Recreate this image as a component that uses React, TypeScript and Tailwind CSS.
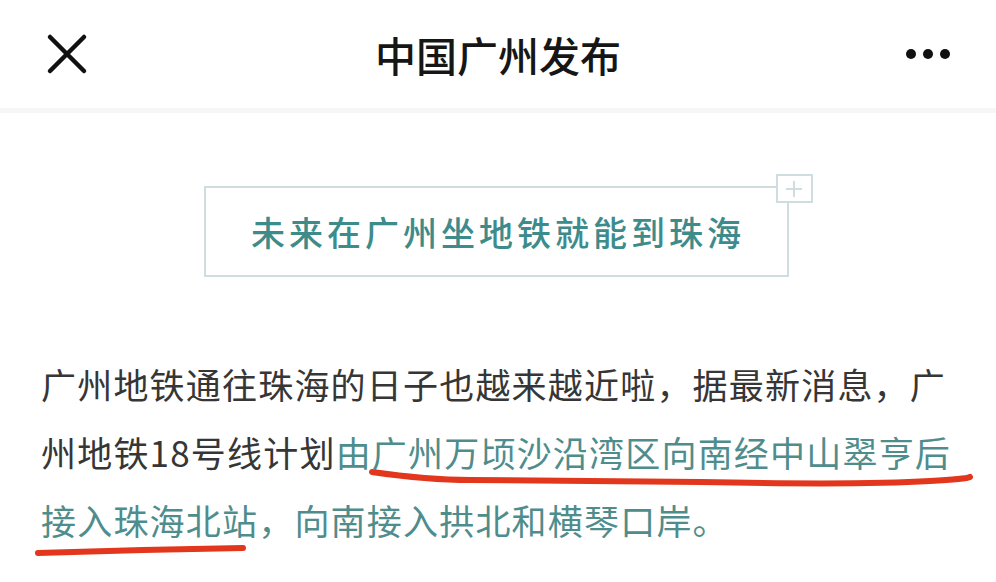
import React from 'react'

const cjk = { fontFamily: '"Noto Sans CJK SC", "Noto Sans", sans-serif' }

const Header = () => (
  <div className="h-[108px] flex items-center justify-between px-[44px] bg-white relative">
    <svg width="42" height="42" viewBox="0 0 42 42" className="ml-[2px]">
      <path d="M4 4 L38 38 M38 4 L4 38" stroke="#111" strokeWidth="4.5" strokeLinecap="round" />
    </svg>
    <div className="absolute left-0 right-0 text-center text-[41px] font-medium text-[#161616] leading-none pointer-events-none">
      中国广州发布
    </div>
    <div className="flex items-center gap-[7px] mr-[2px]">
      <span className="w-[10px] h-[10px] rounded-full bg-[#111]" />
      <span className="w-[10px] h-[10px] rounded-full bg-[#111]" />
      <span className="w-[10px] h-[10px] rounded-full bg-[#111]" />
    </div>
  </div>
)

const TitleBox = () => (
  <div className="flex justify-center pt-[73px] pr-[4px]">
    <div className="relative w-[585px] h-[91px] border-2 border-[#cfdde0] flex items-center justify-center">
      <span className="text-[34px] tracking-[4px] text-[#3e8b8b] font-medium leading-none pl-[4px]">
        未来在广州坐地铁就能到珠海
      </span>
      <div className="absolute -top-[14px] -right-[26px] w-[37px] h-[29px] bg-white border-2 border-[#cfdde0] flex items-center justify-center">
        <svg width="20" height="20" viewBox="0 0 20 20">
          <path d="M10 2 V18 M2 10 H18" stroke="#cfdde0" strokeWidth="2" />
        </svg>
      </div>
    </div>
  </div>
)

const Body = () => (
  <div className="pt-[73px] pl-[41px] text-[35px] leading-[68px] tracking-[1.2px] text-[#363636] whitespace-nowrap">
    <div>广州地铁通往珠海的日子也越来越近啦，据最新消息，广</div>
    <div>
      州地铁18号线计划
      <span className="text-[#4f8d8d]">由广州万顷沙沿湾区向南经中山翠亨后</span>
    </div>
    <div className="text-[#4f8d8d]">接入珠海北站，向南接入拱北和横琴口岸。</div>
  </div>
)

export default function App() {
  return (
    <div className="w-[996px] h-[582px] bg-white overflow-hidden relative" style={cjk}>
      <Header />
      <div className="h-[5px] bg-[#f6f6f6]" />
      <TitleBox />
      <Body />
      <svg className="absolute inset-0 pointer-events-none" width="996" height="582">
        <path
          d="M372 472 C 400 476 430 480 470 480 L 700 482 C 800 484 880 484 930 481 Q 966 479 970 477"
          stroke="#e2371c"
          strokeWidth="6"
          fill="none"
          strokeLinecap="round"
        />
        <path d="M38 553 C 100 551 180 549 243 548" stroke="#e2371c" strokeWidth="6" fill="none" strokeLinecap="round" />
      </svg>
    </div>
  )
}
